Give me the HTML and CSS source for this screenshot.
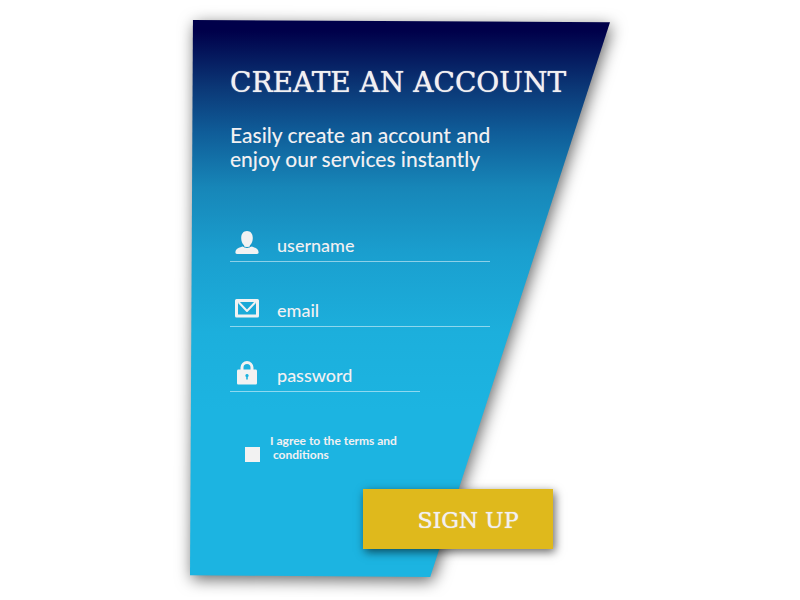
FILE: index.html
```html
<!DOCTYPE html>
<html lang="en">
<head>
<meta charset="utf-8">
<meta name="viewport" content="width=device-width, initial-scale=1">
<title>Create an account</title>
<link rel="stylesheet" href="styles.css">
</head>
<body>
<main class="card">
  <div class="card-shape"></div>
  <form class="form">
    <h1 class="title">CREATE AN ACCOUNT</h1>
    <p class="intro">Easily create an account and<br>enjoy our services instantly</p>

    <div class="fields">
      <div class="field">
        <label for="username" aria-label="username">
          <svg class="icon" viewBox="0 0 24 24"><path d="M12 0C8.300 0 6.200 2.800 6.200 6.900c0 3 1.100 5.800 2.900 7.300v.8C7 16 .4 16.400.4 21.300c0 1 .5 1.700 1.600 1.700h20c1.100 0 1.600-.7 1.600-1.700 0-4.900-6.600-5.300-8.700-6.300v-.8c1.800-1.500 2.900-4.300 2.900-7.300C17.800 2.800 15.700 0 12 0z"/><path class="groove" d="M6.500 13.500c1.400 2 3.200 3 5.500 3s4.100-1 5.500-3"/></svg>
        </label>
        <input id="username" type="text" placeholder="username">
      </div>
      <div class="field">
        <label for="email" aria-label="email">
          <svg class="icon" viewBox="0 0 24 24"><path class="stroke" d="M1.500 4.500h21v15.500h-21z"/><path class="stroke flap" d="M3.500 6l8.500 9 8.500-9"/></svg>
        </label>
        <input id="email" type="email" placeholder="email">
      </div>
      <div class="field field-short">
        <label for="password" aria-label="password">
          <svg class="icon" viewBox="0 0 24 24"><path class="stroke" d="M7 10V6.500a5 5 0 0 1 10 0V10"/><path fill-rule="evenodd" d="M3.500 8.500h17c1 0 1.500.6 1.500 1.500v12c0 1-.6 1.500-1.500 1.500h-17C2.600 23.500 2 23 2 22V10c0-.9.500-1.500 1.500-1.500zM12 13a1.600 1.600 0 0 0-.8 3v2.500h1.600V16a1.600 1.600 0 0 0-.8-3z"/></svg>
        </label>
        <input id="password" type="password" placeholder="password">
      </div>
    </div>

    <div class="terms">
      <input id="terms" type="checkbox">
      <label for="terms">I agree to the terms and<br>&nbsp;conditions</label>
    </div>

    <button class="submit" type="submit">SIGN UP</button>
  </form>
</main>
</body>
</html>
```
FILE: styles.css
```css
* {
  box-sizing: border-box;
}

body {
  margin: 0;
  padding: 20px;
  background: #fff;
  color: #f2f0f2;
  font-family: Lato, "Liberation Sans", sans-serif;
}

.card {
  position: relative;
  max-width: 420px;
  margin: 0 auto;
}

.card-shape {
  position: absolute;
  inset: 0;
  filter: drop-shadow(2px 4px 8px rgba(0, 0, 0, 0.6));
}

.card-shape::before {
  content: "";
  position: absolute;
  inset: 0;
  background: linear-gradient(#00004a 2%, #0b3776 12%, #0f5c98 20%, #1786b8 30%, #1a9fcf 42%, #1cafdc 56%, #1cb4e1 70%);
  clip-path: polygon(0.7% 0, 100% 0.4%, 57.2% 100%, 0 99.7%);
}

.form {
  position: relative;
  display: flex;
  flex-direction: column;
  padding: 45px 0 28px 40px;
}

.title {
  margin: 0;
  font: 400 28px/36px "DejaVu Serif", serif;
  text-shadow: 0 0 1px #f2f0f2;
  white-space: nowrap;
}

.intro {
  margin: 22px 0 0;
  font-size: 21px;
  font-weight: 500;
  line-height: 24px;
}

.fields {
  display: flex;
  flex-direction: column;
  gap: 31px;
  margin-top: 57px;
  padding-right: 120px;
}

.field {
  display: flex;
  align-items: center;
  gap: 18px;
  height: 34px;
  padding-left: 5px;
  border-bottom: 1px solid rgba(255, 255, 255, 0.5);
}

.field-short {
  margin-right: 70px;
}

.field label {
  height: 28px;
}

.icon {
  display: block;
  width: 24px;
  height: 24px;
  fill: #f2f2f2;
}

.icon .groove {
  fill: none;
  stroke: #1a98c8;
  stroke-width: 1;
}

.icon .stroke {
  fill: none;
  stroke: #f2f2f2;
  stroke-width: 3;
  stroke-linejoin: round;
}

.icon .flap {
  stroke-width: 2;
}

.field input {
  flex: 1;
  min-width: 0;
  height: 28px;
  padding: 0;
  border: 0;
  outline: 0;
  background: none;
  color: inherit;
  font: 500 18px/28px Lato, "Liberation Sans", sans-serif;
}

.field input::placeholder {
  color: #f2f0f2;
  opacity: 1;
}

.terms {
  display: flex;
  align-items: flex-end;
  gap: 10px;
  margin-top: 42px;
  padding-left: 15px;
  font-size: 12px;
  font-weight: 700;
  line-height: 14px;
}

.terms input {
  appearance: none;
  width: 15px;
  height: 15px;
  margin: 0;
  background: #f2f2f2;
}

.terms input:checked {
  box-shadow: inset 0 0 0 3px #f2f2f2;
  background: #0f5c98;
}

.submit {
  width: 190px;
  height: 60px;
  margin: 27px 0 0 133px;
  padding: 4px 0 0 20px;
  border: 0;
  background: #dfb91c;
  box-shadow: 2px 3px 9px rgba(0, 0, 0, 0.6);
  color: #f2f0f2;
  font: 400 22px/24px "DejaVu Serif", serif;
  text-shadow: 0 0 1px #f2f0f2;
}
```
